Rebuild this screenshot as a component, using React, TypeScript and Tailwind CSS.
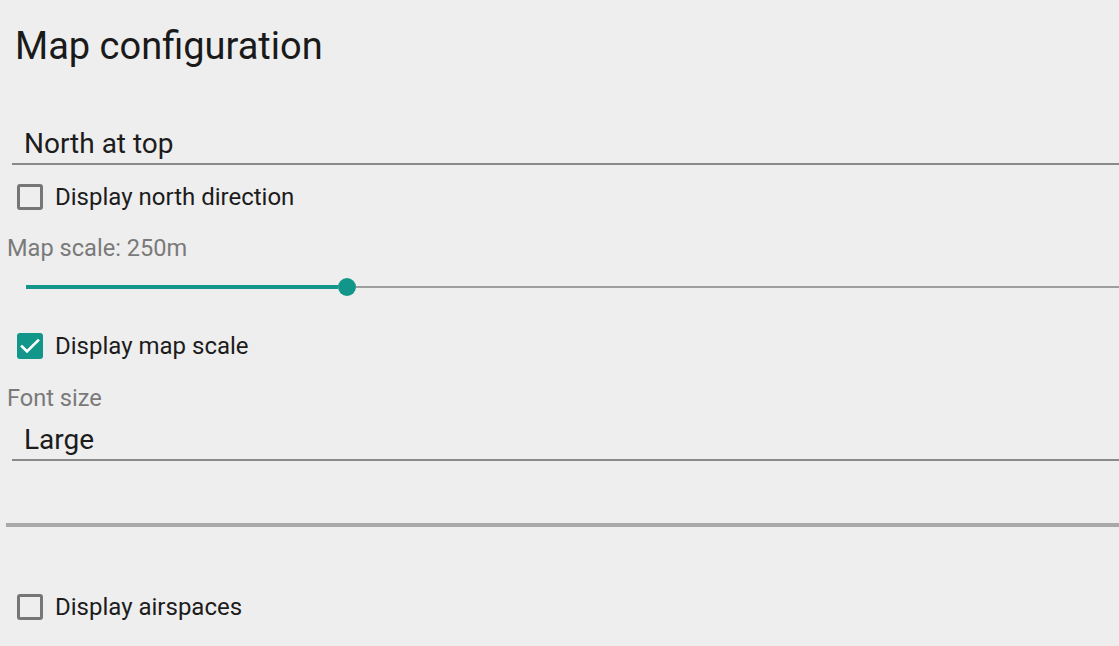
import type { ReactNode } from "react";

const TEAL = "#13968a";

// Checkbox row with label
function CheckRow({ label, checked, className }: { label: string; checked?: boolean; className?: string }) {
  return (
    <div className={`flex items-center h-[26px] pl-[17px] gap-3 ${className ?? ""}`}>
      {checked ? (
        <div className="w-[26px] h-[26px] rounded-[3px] bg-[#13968a] flex items-center justify-center">
          <svg width="24" height="24" viewBox="0 0 24 24" fill="none">
            <path d="M4 12.5l5 5L20 6.5" stroke="white" strokeWidth="2.6" strokeLinecap="square" strokeLinejoin="miter" />
          </svg>
        </div>
      ) : (
        <div className="w-[26px] h-[26px] rounded-[3px] border-[3px] border-[#767676]" />
      )}
      <span className="text-[24px] leading-[26px] text-[#1c1c1c]">{label}</span>
    </div>
  );
}

// Spinner-style dropdown with underline
function Select({ value, className }: { value: ReactNode; className?: string }) {
  return (
    <div
      className={`ml-3 pl-3 h-[37px] text-[28px] leading-[32px] text-[#1c1c1c] border-b-2 border-[#8a8a8a] ${className ?? ""}`}
    >
      {value}
    </div>
  );
}

function Caption({ text, className }: { text: string; className?: string }) {
  return <div className={`pl-[7px] h-[28px] text-[23.6px] leading-[28px] text-[#7a7a7a] ${className ?? ""}`}>{text}</div>;
}

function App() {
  return (
    <div
      className="min-h-screen w-full bg-[#eeeeee] overflow-hidden flex flex-col"
      style={{ fontFamily: "Roboto, 'Noto Sans', sans-serif" }}
    >
      {/* Title */}
      <h1 className="mt-6 pl-[15px] h-[44px] text-[38px] leading-[44px] text-[#1a1a1a] font-normal">
        Map configuration
      </h1>

      <Select value="North at top" className="mt-[60px]" />

      <CheckRow label="Display north direction" className="mt-[19px]" />

      <Caption text="Map scale: 250m" className="mt-6" />

      {/* Slider */}
      <div className="mt-[15px] h-[20px] ml-[26px] flex items-center">
        <div className="w-[312px] h-1" style={{ backgroundColor: TEAL }} />
        <div className="w-[18px] h-[18px] rounded-full shrink-0" style={{ backgroundColor: TEAL }} />
        <div className="flex-1 h-[2px] bg-[#9e9e9e]" />
      </div>

      <CheckRow label="Display map scale" checked className="mt-[36px]" />

      <Caption text="Font size" className="mt-[25px]" />

      <Select value="Large" className="mt-3" />

      {/* Separator */}
      <div className="mt-[62px] ml-[6px] h-[4px] bg-[#a9a9a9]" />

      <CheckRow label="Display airspaces" className="mt-[67px]" />
    </div>
  );
}

export default App;
